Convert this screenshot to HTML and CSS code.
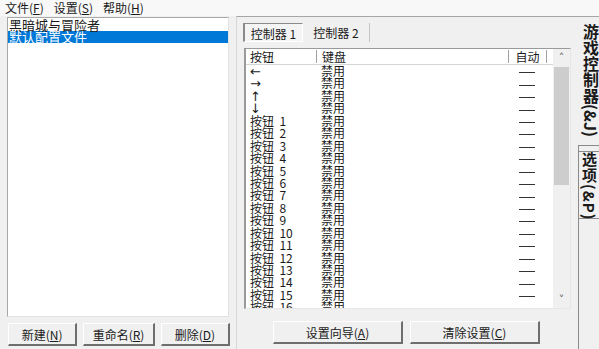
FILE: index.html
```html
<!DOCTYPE html>
<html lang="zh-CN">
<head>
    <meta charset="UTF-8">
    <title>游戏控制器</title>
    <link rel="stylesheet" href="styles.css">
</head>
<body>
    <div class="menubar">
        <span>文件(<u>F</u>)</span>
        <span>设置(<u>S</u>)</span>
        <span>帮助(<u>H</u>)</span>
    </div>

    <div class="main">
        <div class="left">
            <div class="listbox">
                <div class="item">黑暗城与冒险者</div>
                <div class="item selected">默认配置文件</div>
            </div>
            <div class="btnrow">
                <button class="btn btn-new">新建(<u>N</u>)</button>
                <button class="btn btn-rename">重命名(<u>R</u>)</button>
                <button class="btn btn-del">删除(<u>D</u>)</button>
            </div>
        </div>

        <div class="right">
            <div class="page">
                <div class="subtabs">
                    <div class="subtab active">控制器 1</div>
                    <div class="subtab">控制器 2</div>
                </div>

                <div class="listview">
                    <div class="lv-main">
                        <div class="lv-head">
                            <div class="col c1">按钮</div>
                            <div class="col c2">键盘</div>
                            <div class="col c3">自动</div>
                            <div class="col c4"></div>
                        </div>
                        <div class="lv-rows" id="rows"></div>
                    </div>
                    <div class="scrollbar">
                        <div class="sb-arrow">&#708;</div>
                        <div class="sb-track"><div class="sb-thumb"></div></div>
                        <div class="sb-arrow">&#709;</div>
                    </div>
                </div>

                <div class="btnrow2">
                    <button class="btn btn-wide">设置向导(<u>A</u>)</button>
                    <button class="btn btn-wide">清除设置(<u>C</u>)</button>
                </div>
            </div>

            <div class="vtabs">
                <div class="vtab active">游戏控制器(&amp;J)</div>
                <div class="vtab">选项(&amp;P)</div>
            </div>
        </div>
    </div>

    <script>
        // lignes de la liste des boutons
        const fleches = ['\u2190', '\u2192', '\u2191', '\u2193'];
        const noms = fleches.map(f => `<span class="arrow">${f}\uFE0E</span>`);
        for (let i = 1; i <= 16; i++) {
            noms.push('按钮&nbsp;&nbsp;' + i);
        }

        document.getElementById('rows').innerHTML = noms.map(nom => `
            <div class="row">
                <div class="col c1">${nom}</div>
                <div class="col c2">禁用</div>
                <div class="col c3"><span class="dash"></span></div>
            </div>
        `).join('');
    </script>
</body>
</html>
```

FILE: styles.css
```css
body {
    margin: 0;
    width: 599px;
    height: 349px;
    overflow: hidden;
    background: #f0f0f0;
    font-family: "Noto Sans CJK SC", "Liberation Sans", sans-serif;
    font-size: 12px;
    color: #1a1a1a;
}

u {
    text-decoration: underline;
}

.menubar {
    height: 16px;
    display: flex;
    gap: 10px;
    padding-left: 5px;
    line-height: 15px;
    background: #f8f8f8;
}

.main {
    display: flex;
    height: 333px;
}

.left {
    width: 230px;
    flex: none;
}

.listbox {
    margin: 1px 0 0 7px;
    width: 220px;
    height: 297px;
    padding-top: 1px;
    background: #fff;
    border: 1px solid #a8a8a8;
    border-right-color: #e2e2e2;
    border-bottom-color: #e2e2e2;
}

.item {
    height: 12px;
    line-height: 12px;
    padding-left: 1px;
    font-size: 13px;
    white-space: nowrap;
}

.item.selected {
    background: #0078d7;
    color: #fff;
}

.btnrow {
    display: flex;
    gap: 6px;
    margin: 6px 0 0 8px;
}

.btn {
    height: 23px;
    padding: 0;
    font-family: inherit;
    font-size: 12px;
    color: #1a1a1a;
    background: #f0f0f0;
    border: 1px solid #fff;
    border-right: 2px solid #6e6e6e;
    border-bottom: 2px solid #6e6e6e;
}

.btn-new { width: 70px; }
.btn-rename { width: 72px; }
.btn-del { width: 70px; }
.btn-wide { width: 130px; }

.right {
    flex: 1;
    display: flex;
}

.page {
    margin-left: 6px;
    width: 331px;
    padding: 6px 4px 0 6px;
    border-top: 1px solid #a6a6a6;
    border-left: 1px solid #d8d8d8;
    border-right: 1px solid #8a8a8a;
}

.subtabs {
    display: flex;
    height: 19px;
}

.subtab {
    width: 60px;
    line-height: 17px;
    text-align: center;
    border-right: 1px solid #c4c4c4;
    padding-top: 1px;
}

.subtab + .subtab {
    width: 66px;
}

.subtab.active {
    border: 1px solid #fff;
    border-top-color: #8a8a8a;
    border-left: 2px solid #8a8a8a;
    background: #f4f4f4;
    width: 57px;
}

.listview {
    display: flex;
    margin: 6px 0 0 1px;
    height: 259px;
    width: 324px;
    background: #fff;
    border: 1px solid #9a9a9a;
    border-right-color: #e6e6e6;
    border-bottom-color: #e6e6e6;
    border-left-width: 2px;
}

.lv-main {
    flex: 1;
    overflow: hidden;
}

.lv-head {
    display: flex;
    height: 15px;
    line-height: 15px;
    border-bottom: 1px solid #d5d5d5;
}

.lv-head .col {
    border-right: 1px solid #a0a0a0;
    height: 13px;
    margin-top: 1px;
    line-height: 13px;
}

.lv-head .c4 {
    border-right: none;
}

.col {
    flex: none;
    white-space: nowrap;
}

.c1 { width: 66px; padding-left: 4px; }
.c2 { width: 186px; padding-left: 5px; }
.c3 { width: 37px; text-align: center; }
.c4 { flex: 1; }

.row {
    display: flex;
    height: 12.45px;
    line-height: 12.45px;
}

.arrow {
    font-family: "DejaVu Sans", sans-serif;
    font-size: 13px;
    color: #1a1a1a;
}

.dash {
    display: inline-block;
    width: 16px;
    height: 1px;
    background: #333;
    vertical-align: middle;
    margin-left: 3px;
}

.scrollbar {
    width: 17px;
    display: flex;
    flex-direction: column;
    background: #f0f0f0;
}

.sb-arrow {
    height: 17px;
    line-height: 17px;
    text-align: center;
    font-size: 11px;
    color: #606060;
    font-family: "DejaVu Sans", sans-serif;
}

.sb-track {
    flex: 1;
}

.sb-thumb {
    margin: 1px 1px 0 1px;
    height: 118px;
    background: #cdcdcd;
}

.btnrow2 {
    display: flex;
    justify-content: center;
    gap: 7px;
    margin: 12px 0 0 0;
    padding-right: 4px;
}

.vtabs {
    width: 24px;
    display: flex;
    flex-direction: column;
}

.vtab {
    writing-mode: vertical-rl;
    white-space: nowrap;
    width: 21px;
    height: 66px;
    margin-top: 5px;
    font-size: 15px;
    font-weight: bold;
    letter-spacing: 1px;
    line-height: 21px;
    text-align: center;
    border: 1px solid #8a8a8a;
    border-left: none;
    background: #f0f0f0;
}

.vtab.active {
    position: relative;
    z-index: 1;
    margin: 0 0 0 -1px;
    width: 23px;
    height: 128px;
    font-size: 16px;
    letter-spacing: 0;
    border-top: 1px solid #a6a6a6;
}
```
